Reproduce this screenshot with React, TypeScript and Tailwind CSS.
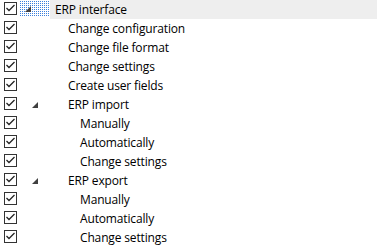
import React from "react";

type Row = { label: string; level: number; expander?: boolean; selected?: boolean };

const rows: Row[] = [
  { label: "ERP interface", level: 0, expander: true, selected: true },
  { label: "Change configuration", level: 1 },
  { label: "Change file format", level: 1 },
  { label: "Change settings", level: 1 },
  { label: "Create user fields", level: 1 },
  { label: "ERP import", level: 1, expander: true },
  { label: "Manually", level: 2 },
  { label: "Automatically", level: 2 },
  { label: "Change settings", level: 2 },
  { label: "ERP export", level: 1, expander: true },
  { label: "Manually", level: 2 },
  { label: "Automatically", level: 2 },
  { label: "Change settings", level: 2 },
];

function CheckBox() {
  return (
    <div className="w-[13px] h-[13px] border border-[#333333] bg-white flex items-center justify-center">
      <svg width="11" height="11" viewBox="0 0 11 11">
        <polyline points="1.5,5 4,7.5 9.5,2" fill="none" stroke="#222222" strokeWidth="1.3" />
      </svg>
    </div>
  );
}

function Tri() {
  return (
    <svg width="6" height="6" viewBox="0 0 6 6">
      <polygon points="6,0 6,6 0,6" fill="#404040" />
    </svg>
  );
}

function Dots() {
  return (
    <svg width="30" height="16" className="absolute left-0 top-[1px]">
      <defs>
        <pattern id="focusdots" width="2" height="2" patternUnits="userSpaceOnUse">
          <rect x="0" y="0" width="1" height="1" fill="#3a7fdc" />
        </pattern>
      </defs>
      <rect x="0" y="0" width="30" height="16" fill="url(#focusdots)" />
    </svg>
  );
}

const textPad: Record<number, string> = { 0: "pl-[5px]", 1: "pl-[18px]", 2: "pl-[30px]" };

export default function App() {
  return (
    <div className="w-[377px] h-[246px] bg-white overflow-hidden" style={{ fontFamily: '"Open Sans", "Noto Sans", sans-serif' }}>
      {rows.map((r, i) => (
        <div key={i} className="flex h-[19px] items-start">
          <div className="w-[4px]" />
          <div className="pt-[2px]">
            <CheckBox />
          </div>
          <div className="w-[3px]" />
          <div className="w-[30px] h-[17px] relative">
            {r.selected && <Dots />}
            {r.expander && (
              <div className={r.level === 0 ? "absolute left-[5px] top-[6px]" : "absolute left-[12px] top-[7px]"}>
                <Tri />
              </div>
            )}
          </div>
          <div className={`flex-1 h-[19px] flex items-center ${r.selected ? "bg-[#eeeeee]" : ""} ${textPad[r.level]}`}>
            <span className="text-[12px] text-black leading-none whitespace-nowrap tracking-[-0.15px]">{r.label}</span>
          </div>
        </div>
      ))}
    </div>
  );
}
